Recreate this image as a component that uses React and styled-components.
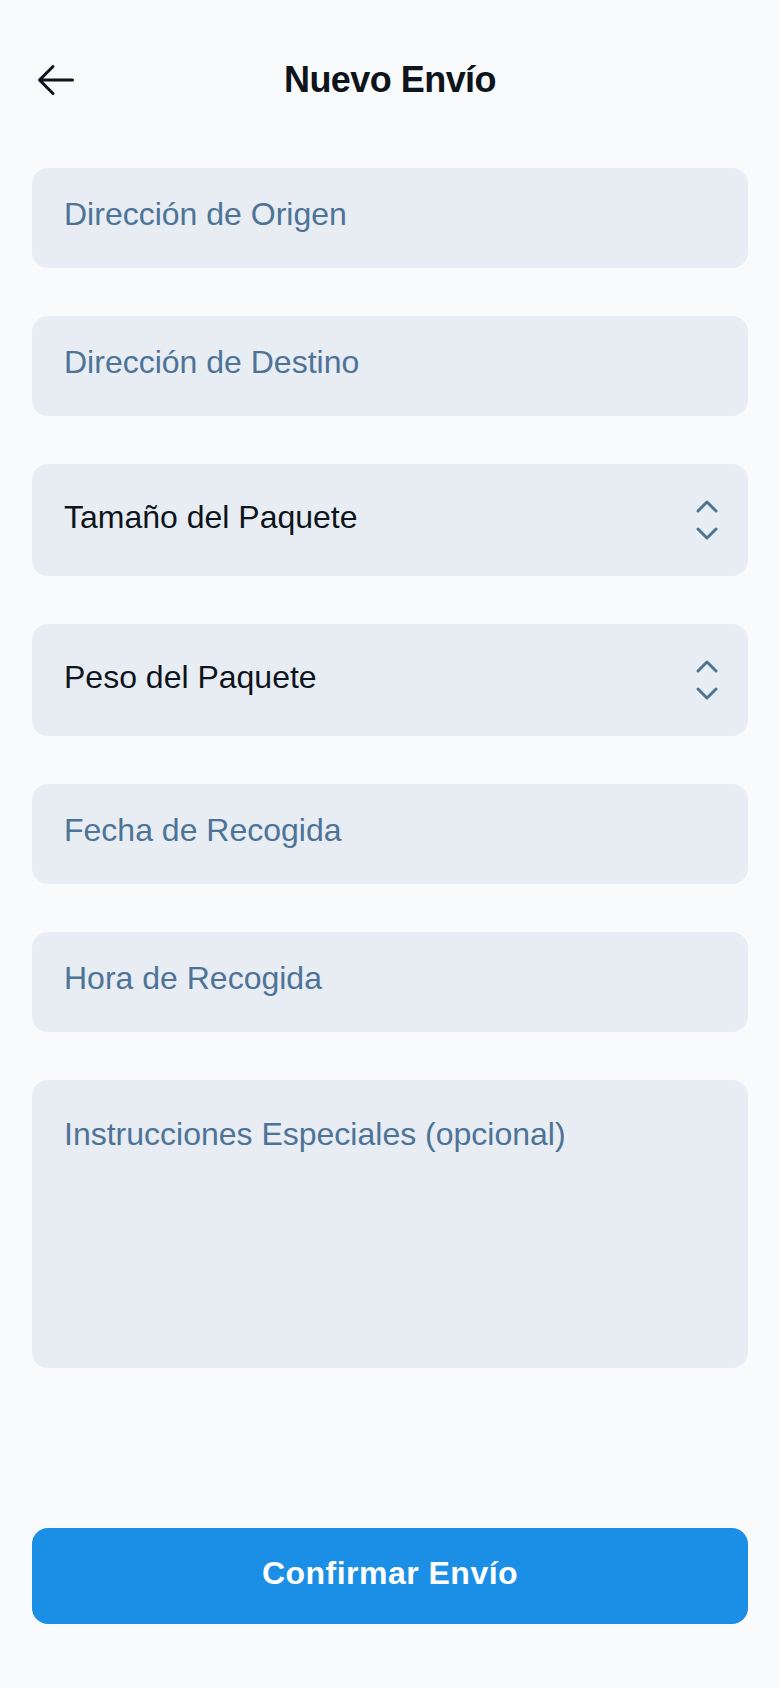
import React from "react";
import styled, { createGlobalStyle } from "styled-components";

const GlobalStyle = createGlobalStyle`
  * { box-sizing: border-box; }
  html, body { margin: 0; padding: 0; background: #f8fafc; }
  body { font-family: "Liberation Sans", Arial, sans-serif; }
  #root { min-height: 100vh; }
`;

const Page = styled.div`
  min-height: 100vh;
  display: flex;
  flex-direction: column;
  background: #f8fafc;
  color: #0e141b;
`;

const Header = styled.header`
  display: flex;
  align-items: center;
  padding: 56px 32px 0;
`;

const BackButton = styled.button`
  width: 48px;
  height: 48px;
  padding: 0;
  border: none;
  background: transparent;
  color: #0e141b;
  display: flex;
  align-items: center;
  justify-content: center;
  cursor: pointer;
  flex-shrink: 0;
`;

const Title = styled.h1`
  flex: 1;
  margin: 0;
  padding-right: 48px;
  text-align: center;
  font-size: 36px;
  font-weight: 700;
  letter-spacing: -0.54px;
  line-height: 48px;
  color: #0e141b;
`;

const Form = styled.form`
  display: flex;
  flex-direction: column;
  gap: 48px;
  padding: 64px 32px 0;
`;

const fieldBase = `
  width: 100%;
  border: none;
  outline: none;
  border-radius: 16px;
  background: #e7edf3;
  font-family: "Liberation Sans", Arial, sans-serif;
  font-size: 32px;
  color: #0e141b;
`;

const TextInput = styled.input`
  ${fieldBase}
  height: 100px;
  padding: 0 32px 8px;
  &::placeholder { color: #4e7397; opacity: 1; }
`;

const SelectBox = styled.div`
  ${fieldBase}
  height: 112px;
  padding: 0 17px 0 32px;
  display: flex;
  align-items: center;
  justify-content: space-between;
  cursor: pointer;
`;

const SelectLabel = styled.span`
  color: #0e141b;
  margin-bottom: 5px;
`;

const TextArea = styled.textarea`
  ${fieldBase}
  height: 288px;
  padding: 30px 32px;
  line-height: 1.5;
  resize: none;
  &::placeholder { color: #4e7397; opacity: 1; }
`;

const Spacer = styled.div`
  flex: 1;
`;

const Footer = styled.div`
  padding: 0 32px 64px;
`;

const PrimaryButton = styled.button`
  width: 100%;
  height: 96px;
  padding: 0 0 6px;
  border: none;
  border-radius: 16px;
  background: #1b8fe6;
  color: #ffffff;
  font-family: "Liberation Sans", Arial, sans-serif;
  font-size: 32px;
  font-weight: 700;
  letter-spacing: 0.48px;
  cursor: pointer;
`;

const ArrowLeft = () => (
  <svg width="48" height="48" viewBox="0 0 256 256" fill="currentColor">
    <path d="M224,128a8,8,0,0,1-8,8H59.31l58.35,58.34a8,8,0,0,1-11.32,11.32l-72-72a8,8,0,0,1,0-11.32l72-72a8,8,0,0,1,11.32,11.32L59.31,120H216A8,8,0,0,1,224,128Z" />
  </svg>
);

const CaretUpDown = () => (
  <svg width="48" height="48" viewBox="0 0 256 256" fill="#4e7397">
    <path d="M181.66,170.34a8,8,0,0,1,0,11.32l-48,48a8,8,0,0,1-11.32,0l-48-48a8,8,0,0,1,11.32-11.32L128,212.69l42.34-42.35A8,8,0,0,1,181.66,170.34Zm-96-84.68L128,43.31l42.34,42.35a8,8,0,0,0,11.32-11.32l-48-48a8,8,0,0,0-11.32,0l-48,48A8,8,0,0,0,85.66,85.66Z" />
  </svg>
);

const Select = ({ label }) => (
  <SelectBox role="button" tabIndex={0}>
    <SelectLabel>{label}</SelectLabel>
    <CaretUpDown />
  </SelectBox>
);

export default function App() {
  return (
    <>
      <GlobalStyle />
      <Page>
        <Header>
          <BackButton aria-label="Volver">
            <ArrowLeft />
          </BackButton>
          <Title>Nuevo Envío</Title>
        </Header>
        <Form onSubmit={(e) => e.preventDefault()}>
          <TextInput placeholder="Dirección de Origen" />
          <TextInput placeholder="Dirección de Destino" />
          <Select label="Tamaño del Paquete" />
          <Select label="Peso del Paquete" />
          <TextInput placeholder="Fecha de Recogida" />
          <TextInput placeholder="Hora de Recogida" />
          <TextArea placeholder="Instrucciones Especiales (opcional)" />
        </Form>
        <Spacer />
        <Footer>
          <PrimaryButton type="button">Confirmar Envío</PrimaryButton>
        </Footer>
      </Page>
    </>
  );
}
